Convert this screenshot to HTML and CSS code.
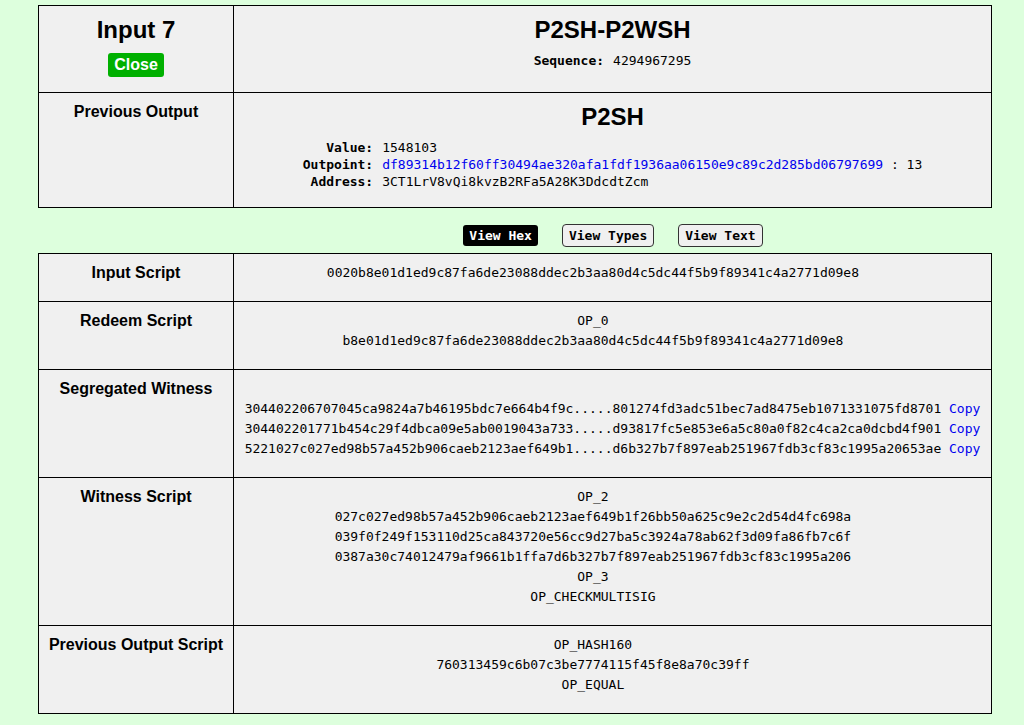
FILE: index.html
```html
<!DOCTYPE html>
<html>
<head>
<meta charset="utf-8">
<title>Input 7</title>
<link rel="stylesheet" href="styles.css">
</head>
<body>
<div class="page">
  <table class="grid top">
    <colgroup><col class="c1"><col class="c2"></colgroup>
    <tr>
      <td class="cell head-left">
        <div class="stack">
          <div class="title">Input 7</div>
          <button class="close">Close</button>
        </div>
      </td>
      <td class="cell">
        <div class="stack">
          <div class="title">P2SH-P2WSH</div>
          <div class="kv">
            <span class="k">Sequence:</span><span class="v">4294967295</span>
          </div>
        </div>
      </td>
    </tr>
    <tr>
      <td class="cell"><div class="label">Previous Output</div></td>
      <td class="cell">
        <div class="stack">
          <div class="title">P2SH</div>
          <div class="kv">
            <span class="k">Value:</span><span class="v">1548103</span>
            <span class="k">Outpoint:</span><span class="v"><a class="link" href="#">df89314b12f60ff30494ae320afa1fdf1936aa06150e9c89c2d285bd06797699</a> : 13</span>
            <span class="k">Address:</span><span class="v">3CT1LrV8vQi8kvzB2RFa5A28K3DdcdtZcm</span>
          </div>
        </div>
      </td>
    </tr>
  </table>

  <div class="viewbar">
    <div class="spacer"></div>
    <div class="views">
      <button class="vbtn active">View Hex</button>
      <button class="vbtn">View Types</button>
      <button class="vbtn">View Text</button>
    </div>
  </div>

  <table class="grid scripts">
    <colgroup><col class="c1"><col class="c2"></colgroup>
    <tr>
      <td class="scell"><div class="label">Input Script</div></td>
      <td class="scell mono">
        <div>0020b8e01d1ed9c87fa6de23088ddec2b3aa80d4c5dc44f5b9f89341c4a2771d09e8<span class="slot"> Copy</span></div>
      </td>
    </tr>
    <tr>
      <td class="scell"><div class="label">Redeem Script</div></td>
      <td class="scell mono">
        <div>OP_0<span class="slot"> Copy</span></div>
        <div>b8e01d1ed9c87fa6de23088ddec2b3aa80d4c5dc44f5b9f89341c4a2771d09e8<span class="slot"> Copy</span></div>
      </td>
    </tr>
    <tr>
      <td class="scell"><div class="label">Segregated Witness</div></td>
      <td class="scell mono">
        <div class="witness">
          <div>304402206707045ca9824a7b46195bdc7e664b4f9c.....801274fd3adc51bec7ad8475eb1071331075fd8701 <a class="link" href="#">Copy</a></div>
          <div>304402201771b454c29f4dbca09e5ab0019043a733.....d93817fc5e853e6a5c80a0f82c4ca2ca0dcbd4f901 <a class="link" href="#">Copy</a></div>
          <div>5221027c027ed98b57a452b906caeb2123aef649b1.....d6b327b7f897eab251967fdb3cf83c1995a20653ae <a class="link" href="#">Copy</a></div>
        </div>
      </td>
    </tr>
    <tr>
      <td class="scell"><div class="label">Witness Script</div></td>
      <td class="scell mono">
        <div>OP_2<span class="slot"> Copy</span></div>
        <div>027c027ed98b57a452b906caeb2123aef649b1f26bb50a625c9e2c2d54d4fc698a<span class="slot"> Copy</span></div>
        <div>039f0f249f153110d25ca843720e56cc9d27ba5c3924a78ab62f3d09fa86fb7c6f<span class="slot"> Copy</span></div>
        <div>0387a30c74012479af9661b1ffa7d6b327b7f897eab251967fdb3cf83c1995a206<span class="slot"> Copy</span></div>
        <div>OP_3<span class="slot"> Copy</span></div>
        <div>OP_CHECKMULTISIG<span class="slot"> Copy</span></div>
      </td>
    </tr>
    <tr>
      <td class="scell"><div class="label">Previous Output Script</div></td>
      <td class="scell mono">
        <div>OP_HASH160<span class="slot"> Copy</span></div>
        <div>760313459c6b07c3be7774115f45f8e8a70c39ff<span class="slot"> Copy</span></div>
        <div>OP_EQUAL<span class="slot"> Copy</span></div>
      </td>
    </tr>
  </table>
</div>
</body>
</html>
```

FILE: styles.css
```css
html, body {
  margin: 0;
  padding: 0;
}

body {
  background: #ddffdd;
  color: #000;
  font-family: "Liberation Sans", Arial, sans-serif;
}

.page {
  padding: 5px 0 0 38px;
}

.grid {
  width: 953px;
  table-layout: fixed;
  border-collapse: collapse;
  background: #f0f0f0;
}

.grid col.c1 {
  width: 195px;
}

.grid col.c2 {
  width: 758px;
}

.grid td {
  border: 1px solid #000;
  vertical-align: top;
  text-align: center;
}

.cell {
  padding: 9px 9px 17px;
}

.cell.head-left {
  padding-bottom: 15px;
}

.stack {
  display: flex;
  flex-direction: column;
  align-items: center;
}

.title {
  font-size: 24px;
  font-weight: bold;
  line-height: 30px;
  margin-bottom: 7px;
}

.label {
  font-size: 16px;
  font-weight: bold;
  line-height: 20px;
}

.close {
  font-family: "Liberation Sans", Arial, sans-serif;
  font-size: 16px;
  font-weight: bold;
  line-height: 18px;
  color: #fff;
  background: #00b000;
  border: none;
  border-radius: 3px;
  padding: 3px 6px;
  margin: 1px 0 0;
}

.kv {
  display: grid;
  grid-template-columns: auto auto;
  column-gap: 9px;
  font-family: "DejaVu Sans Mono", monospace;
  font-size: 13px;
  line-height: 17px;
  text-align: left;
  white-space: nowrap;
}

.kv .k {
  font-weight: bold;
  text-align: right;
}

.link {
  color: #0000ee;
  text-decoration: none;
}

.viewbar {
  display: flex;
  width: 953px;
  margin: 16px 0 6px;
}

.spacer {
  width: 195px;
  flex: none;
}

.views {
  flex: 1;
  display: flex;
  justify-content: center;
  align-items: center;
  gap: 24px;
  padding-left: 2px;
}

.vbtn {
  font-family: "DejaVu Sans Mono", monospace;
  font-size: 13px;
  font-weight: bold;
  line-height: 15px;
  color: #000;
  background: #f0f0f0;
  border: 1px solid #333;
  border-radius: 4px;
  padding: 3px 6px;
  margin: 0;
}

.vbtn.active {
  color: #fff;
  background: #000;
  border: none;
  border-radius: 3px;
}

.scell {
  padding: 9px 8px 18px;
}

.mono {
  font-family: "DejaVu Sans Mono", monospace;
  font-size: 13px;
  line-height: 20px;
  white-space: nowrap;
}

.slot {
  visibility: hidden;
}

.witness {
  margin-top: 20px;
}
```
